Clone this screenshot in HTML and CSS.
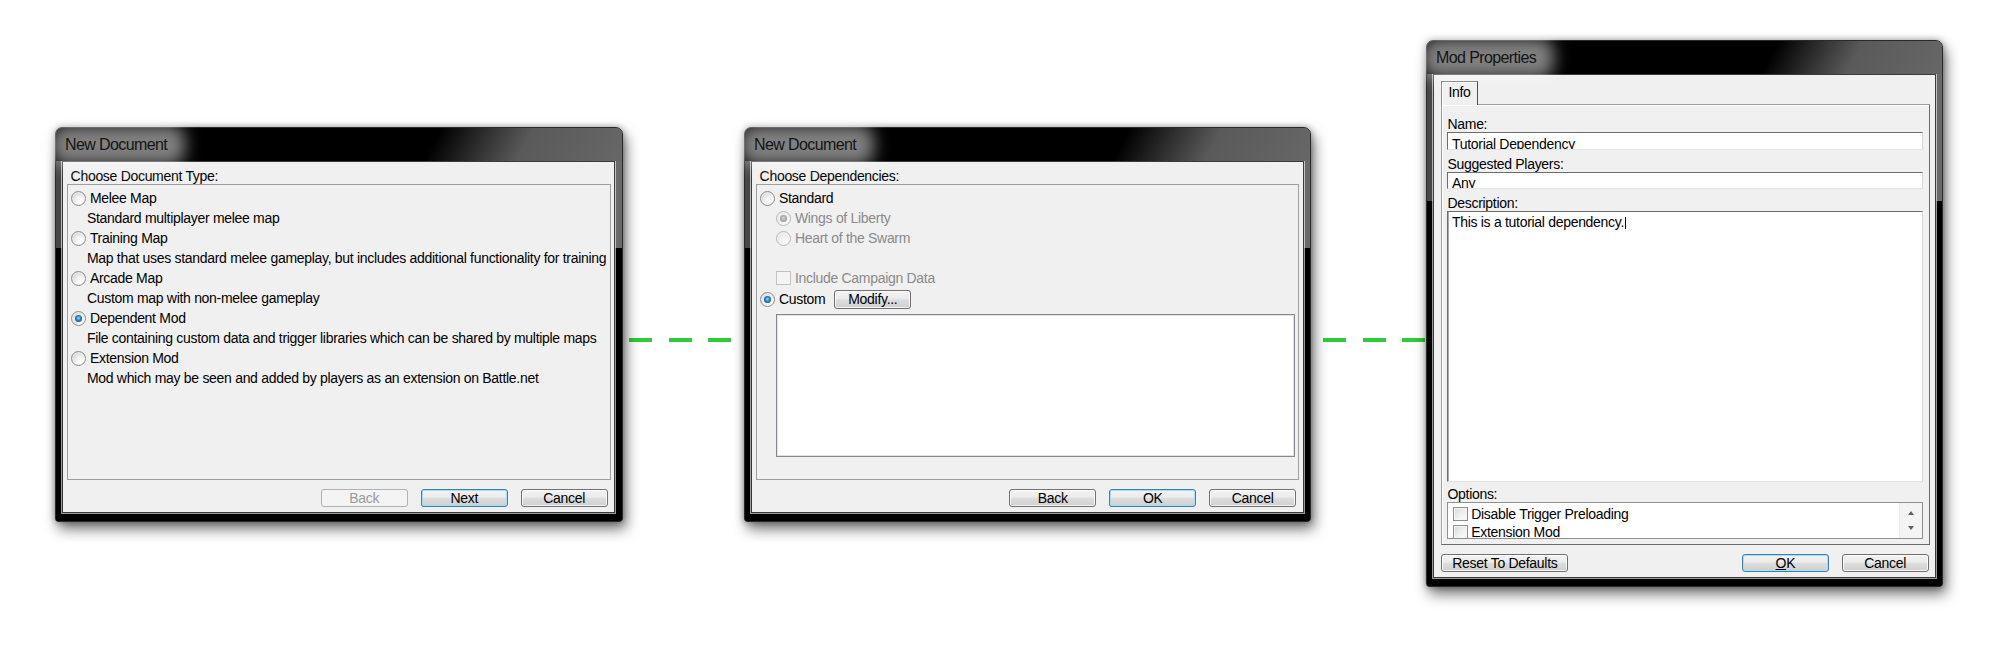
FILE: index.html
```html
<!DOCTYPE html>
<html>
<head>
<meta charset="utf-8">
<link rel="stylesheet" href="styles.css">
</head>
<body>
<div class="desk">
  <div class="dash d1"></div>
  <div class="dash d2"></div>

  <div class="win w1">
    <div class="tbar"><span class="ttl">New Document</span></div>
    <div class="client">
      <div class="cap">Choose Document Type:</div>
      <div class="grp">
        <div class="opt"><span class="radio"></span><span>Melee Map</span></div>
        <div class="desc">Standard multiplayer melee map</div>
        <div class="opt"><span class="radio"></span><span>Training Map</span></div>
        <div class="desc">Map that uses standard melee gameplay, but includes additional functionality for training</div>
        <div class="opt"><span class="radio"></span><span>Arcade Map</span></div>
        <div class="desc">Custom map with non-melee gameplay</div>
        <div class="opt"><span class="radio on"></span><span>Dependent Mod</span></div>
        <div class="desc">File containing custom data and trigger libraries which can be shared by multiple maps</div>
        <div class="opt"><span class="radio"></span><span>Extension Mod</span></div>
        <div class="desc">Mod which may be seen and added by players as an extension on Battle.net</div>
      </div>
      <div class="btns">
        <div class="btn dis">Back</div>
        <div class="btn def">Next</div>
        <div class="btn">Cancel</div>
      </div>
    </div>
  </div>

  <div class="win w2">
    <div class="tbar"><span class="ttl">New Document</span></div>
    <div class="client">
      <div class="cap">Choose Dependencies:</div>
      <div class="grp">
        <div class="opt"><span class="radio"></span><span>Standard</span></div>
        <div class="opt sub"><span class="radio dis on"></span><span class="gray">Wings of Liberty</span></div>
        <div class="opt sub"><span class="radio dis"></span><span class="gray">Heart of the Swarm</span></div>
        <div class="spacer"></div>
        <div class="opt sub"><span class="chk dis"></span><span class="gray">Include Campaign Data</span></div>
        <div class="opt custom"><span class="radio on"></span><span>Custom</span><div class="btn mod">Modify...</div></div>
        <div class="lst"></div>
      </div>
      <div class="btns">
        <div class="btn">Back</div>
        <div class="btn def">OK</div>
        <div class="btn">Cancel</div>
      </div>
    </div>
  </div>

  <div class="win w3">
    <div class="tbar"><span class="ttl">Mod Properties</span></div>
    <div class="client c3">
      <div class="tab">Info</div>
      <div class="panel">
        <div class="lbl">Name:</div>
        <div class="tb">Tutorial Dependency</div>
        <div class="lbl m1">Suggested Players:</div>
        <div class="tb">Any</div>
        <div class="lbl m2">Description:</div>
        <div class="ta">This is a tutorial dependency.<span class="caret"></span></div>
        <div class="lbl m3">Options:</div>
        <div class="opts">
          <div class="rows">
            <div class="crow"><span class="chk"></span><span>Disable Trigger Preloading</span></div>
            <div class="crow"><span class="chk"></span><span>Extension Mod</span></div>
          </div>
          <div class="sb"><span class="up"></span><span class="dn"></span></div>
        </div>
      </div>
      <div class="btns3">
        <div class="btn reset">Reset To Defaults</div>
        <div class="btn def"><span><u>O</u>K</span></div>
        <div class="btn">Cancel</div>
      </div>
    </div>
  </div>
</div>
</body>
</html>
```

FILE: styles.css
```css
html, body {
  margin: 0;
  background: #fff;
}
body {
  font-family: "Liberation Sans", Arial, sans-serif;
  font-size: 14px;
  letter-spacing: -0.3px;
  color: #000;
}
.desk {
  position: relative;
  width: 2000px;
  height: 650px;
  overflow: hidden;
}

/* green connectors */
.dash {
  position: absolute;
  top: 337.5px;
  height: 4px;
  background: repeating-linear-gradient(to right, #2fcb3a 0, #2fcb3a 23px, transparent 23px, transparent 39.7px);
}
.d1 { left: 629px; width: 104px; }
.d2 { left: 1323px; width: 103px; }

/* window frame */
.win {
  position: absolute;
  box-sizing: border-box;
  border: 1px solid #2a2a2a;
  border-radius: 7px 7px 3px 3px;
  display: flex;
  flex-direction: column;
  background:
    linear-gradient(to bottom, rgba(0,0,0,0) 0, rgba(0,0,0,0) var(--split), #000 var(--split)),
    linear-gradient(to right, #474747, #555 50%, #6a6a6a);
  box-shadow: 3px 7px 14px rgba(0,0,0,0.55), 0 0 6px rgba(0,0,0,0.35);
}
.w1 { left: 55px; top: 127px; width: 567.5px; height: 394.5px; --split: 120px; }
.w2 { left: 744px; top: 127px; width: 567px; height: 394.5px; --split: 120px; }
.w3 { left: 1426px; top: 40px; width: 517.2px; height: 546.7px; --split: 160px; }

.tbar {
  flex: none;
  height: 33px;
  border-radius: 6px 6px 0 0;
  background: linear-gradient(118deg, #000 0%, #000 66%, #2e2e2e 74%, #5a5a5a 82%, #676767 100%);
  display: flex;
  align-items: center;
  padding-left: 9px;
  isolation: isolate;
}
.ttl {
  position: relative;
  font-size: 16px;
  letter-spacing: -0.6px;
  line-height: 20px;
  color: #141414;
}
.ttl::before {
  content: "";
  position: absolute;
  left: -14px;
  right: -18px;
  top: -10px;
  bottom: -10px;
  background: rgba(255,255,255,0.5);
  border-radius: 14px;
  filter: blur(8px);
  z-index: -1;
}

.client {
  flex: 1;
  min-height: 0;
  margin: 0 6.5px 7.8px 6.3px;
  border: 1px solid #3a3a3a;
  box-shadow: 0 0 0 1px rgba(255,255,255,0.6);
  background: #f0f0f0;
  display: flex;
  flex-direction: column;
  padding: 6px 3.3px 0;
}
.cap {
  line-height: 16px;
  padding-left: 4px;
}
.grp {
  flex: 1;
  border: 1px solid #a0a0a0;
  padding: 3px 3.3px;
}
.opt {
  display: flex;
  align-items: center;
  height: 20px;
  gap: 4px;
}
.opt.sub { margin-left: 16px; }
.opt.custom { height: 22px; }
.spacer { height: 20px; }
.desc {
  line-height: 20px;
  padding-left: 16px;
  white-space: nowrap;
}
.gray { color: #8a8a8a; }

/* radio buttons */
.radio {
  position: relative;
  flex: none;
  box-sizing: border-box;
  width: 15px;
  height: 15px;
  border: 1px solid #8c8c8c;
  border-radius: 50%;
  background: radial-gradient(circle at 65% 70%, #ffffff 0, #f2f2f2 35%, #c9c9c9 100%);
  box-shadow: inset 0 0 0 1px rgba(255,255,255,0.5);
}
.radio.on::after {
  content: "";
  position: absolute;
  left: 3px;
  top: 3px;
  width: 7px;
  height: 7px;
  border-radius: 50%;
  background: radial-gradient(circle at 50% 45%, #a8dcff 0, #2a86d0 40%, #0c3c68 90%);
}
.radio.dis {
  border-color: #b8b8b8;
  background: radial-gradient(circle at 65% 70%, #fbfbfb 0, #f0f0f0 40%, #e0e0e0 100%);
}
.radio.dis.on::after {
  background: radial-gradient(circle at 50% 45%, #d8d8d8 0, #a9a9a9 50%, #8a8a8a 100%);
}

/* checkboxes */
.chk {
  flex: none;
  box-sizing: border-box;
  width: 15px;
  height: 14px;
  border: 1px solid #8f8f8f;
  background: linear-gradient(135deg, #d8d8d8 0, #f0f0f0 55%, #fcfcfc 100%);
  box-shadow: inset 0 0 0 1px #f6f6f6;
}
.chk.dis {
  border-color: #c2c2c2;
  background: #f4f4f4;
  box-shadow: none;
}

/* buttons */
.btns {
  display: flex;
  justify-content: flex-end;
  gap: 13px;
  margin: 9px 3px 5px 0;
}
.btn {
  box-sizing: border-box;
  flex: none;
  width: 87px;
  height: 18px;
  border: 1px solid #707070;
  border-radius: 3px;
  background: linear-gradient(#f3f3f3 0, #ebebeb 45%, #dddddd 52%, #cfcfcf 100%);
  box-shadow: inset 0 0 0 1px rgba(255,255,255,0.8);
  display: flex;
  align-items: center;
  justify-content: center;
  line-height: 16px;
  white-space: nowrap;
}
.btn.def {
  border-color: #3c7fb1;
  box-shadow: inset 0 0 0 1px #a6def5;
}
.btn.dis {
  border-color: #adb2b5;
  background: #f4f4f4;
  color: #9a9a9a;
  box-shadow: none;
}
.btn.mod {
  width: 77px;
  height: 19px;
  margin-left: 5px;
}
.lst {
  box-sizing: border-box;
  height: 142.7px;
  margin: 4px 0 0 16px;
  border: 1px solid #85888e;
  background: #fff;
  box-shadow: inset 0 0 0 1px #e2e2e2;
}

/* mod properties */
.client.c3 {
  margin: 0 6.5px 7.4px 6.2px;
  padding: 6.4px 5px 5.6px 7.2px;
}
.tab {
  position: relative;
  z-index: 1;
  align-self: flex-start;
  box-sizing: border-box;
  height: 23.6px;
  margin-bottom: -1px;
  padding: 2px 6px 0;
  line-height: 16px;
  border: 1px solid #8e8e8e;
  border-bottom: none;
  border-right-color: #4f4f4f;
  background: #f0f0f0;
  box-shadow: inset 1px 1px 0 #fff;
}
.panel {
  flex: 1;
  min-height: 0;
  display: flex;
  flex-direction: column;
  border: 1px solid;
  border-color: #a0a0a0 #6a6a6a #6a6a6a #a0a0a0;
  box-shadow: inset 1px 1px 0 #fff;
  padding: 12.4px 6.1px 5px 5.1px;
}
.lbl { line-height: 15px; }
.lbl.m1 { margin-top: 7.3px; }
.lbl.m2 { margin-top: 6.4px; }
.lbl.m3 { margin-top: 5.6px; }
.tb {
  box-sizing: border-box;
  height: 17.3px;
  border: 1px solid;
  border-color: #6c6c6c #d6d6d6 #e4e4e4 #6c6c6c;
  background: #fff;
  overflow: hidden;
  padding: 2.5px 0 0 3.5px;
  line-height: 17px;
  white-space: nowrap;
}
.ta {
  flex: 1;
  min-height: 0;
  border: 1px solid;
  border-color: #6c6c6c #d6d6d6 #e4e4e4 #6c6c6c;
  box-shadow: inset 1px 0 0 #a8a8a8;
  background: #fff;
  padding: 2px 3.5px;
  line-height: 16px;
}
.caret {
  display: inline-block;
  width: 1px;
  height: 12px;
  margin-left: 1px;
  vertical-align: -2px;
  background: #000;
}
.opts {
  box-sizing: border-box;
  height: 36.7px;
  border: 1px solid #8f8f8f;
  background: #fff;
  display: flex;
  overflow: hidden;
}
.rows {
  flex: 1;
  padding: 2px 0 0 4.4px;
}
.crow {
  height: 17.7px;
  display: flex;
  align-items: center;
  gap: 3.4px;
}
.sb {
  width: 21.4px;
  background: #f4f4f4;
  border-left: 1px solid #ececec;
  display: flex;
  flex-direction: column;
  justify-content: space-between;
  align-items: center;
  padding: 8px 0 7.7px;
}
.up, .dn {
  width: 0;
  height: 0;
  border-left: 3.5px solid transparent;
  border-right: 3.5px solid transparent;
}
.up { border-bottom: 4px solid #606060; }
.dn { border-top: 4px solid #606060; }
.btns3 {
  display: flex;
  gap: 12.8px;
  margin: 9.3px 1px 0 0;
}
.btns3 .btn { height: 17.4px; }
.btn.reset {
  width: 127px;
  margin-right: auto;
}
```
